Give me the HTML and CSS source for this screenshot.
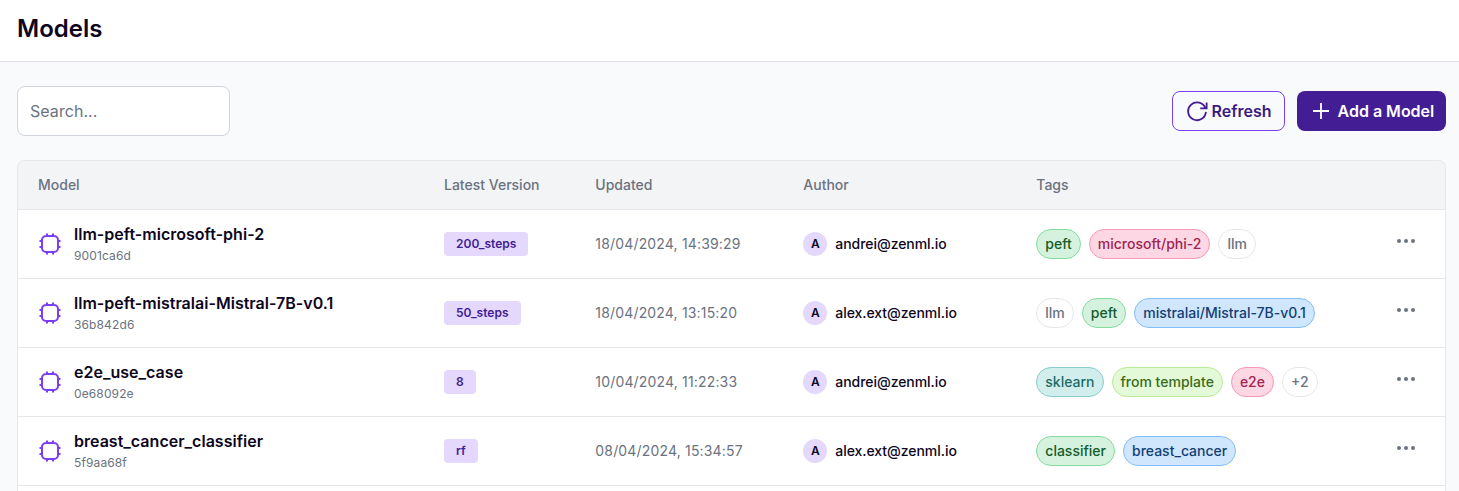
FILE: index.html
```html
<!DOCTYPE html>
<html lang="en">
<head>
<meta charset="utf-8">
<title>Models</title>
<link rel="stylesheet" href="styles.css">
</head>
<body>
<svg class="sprite" aria-hidden="true">
  <symbol id="chip" viewBox="0 0 24 24"><path d="M9 1.500v3M15 1.500v3M9 19.500v3M15 19.500v3M1.500 9h3M1.500 15h3M19.500 9h3M19.500 15h3M8 4h8a4 4 0 0 1 4 4v8a4 4 0 0 1-4 4h-8a4 4 0 0 1-4-4v-8a4 4 0 0 1 4-4z"/></symbol>
  <symbol id="dots" viewBox="0 0 20 6"><circle cx="3" cy="3" r="2"/><circle cx="10" cy="3" r="2"/><circle cx="17" cy="3" r="2"/></symbol>
</svg>
<header class="page-header"><h1 class="title">Models</h1></header>
<main class="content">
  <div class="toolbar">
    <input class="search" type="text" placeholder="Search...">
    <div class="actions">
      <button class="btn btn-outline"><svg class="icon-refresh" viewBox="0 0 24 24"><path d="M21.200 9.200A9.700 9.700 0 1 0 21.700 13M22.500 2.800v6.400h-7"/></svg><span>Refresh</span></button>
      <button class="btn btn-primary"><svg class="icon-plus" viewBox="0 0 16 16"><path d="M8 0v16M0 8h16"/></svg><span>Add a Model</span></button>
    </div>
  </div>
  <section class="table">
    <div class="row head"><span>Model</span><span>Latest Version</span><span>Updated</span><span>Author</span><span>Tags</span><span></span></div>
    <div class="row">
      <div class="model"><svg class="chip"><use href="#chip"/></svg><div><div class="name">llm-peft-microsoft-phi-2</div><div class="id">9001ca6d</div></div></div>
      <div><span class="version">200_steps</span></div>
      <div class="date">18/04/2024, 14:39:29</div>
      <div class="author"><span class="avatar">A</span><span class="email">andrei@zenml.io</span></div>
      <div class="tags"><span class="tag green">peft</span><span class="tag pink">microsoft/phi-2</span><span class="tag">llm</span></div>
      <svg class="dots"><use href="#dots"/></svg>
    </div>
    <div class="row">
      <div class="model"><svg class="chip"><use href="#chip"/></svg><div><div class="name">llm-peft-mistralai-Mistral-7B-v0.1</div><div class="id">36b842d6</div></div></div>
      <div><span class="version">50_steps</span></div>
      <div class="date">18/04/2024, 13:15:20</div>
      <div class="author"><span class="avatar">A</span><span class="email">alex.ext@zenml.io</span></div>
      <div class="tags"><span class="tag">llm</span><span class="tag green">peft</span><span class="tag blue">mistralai/Mistral-7B-v0.1</span></div>
      <svg class="dots"><use href="#dots"/></svg>
    </div>
    <div class="row">
      <div class="model"><svg class="chip"><use href="#chip"/></svg><div><div class="name">e2e_use_case</div><div class="id">0e68092e</div></div></div>
      <div><span class="version">8</span></div>
      <div class="date">10/04/2024, 11:22:33</div>
      <div class="author"><span class="avatar">A</span><span class="email">andrei@zenml.io</span></div>
      <div class="tags"><span class="tag teal">sklearn</span><span class="tag lime">from template</span><span class="tag pink">e2e</span><span class="tag">+2</span></div>
      <svg class="dots"><use href="#dots"/></svg>
    </div>
    <div class="row">
      <div class="model"><svg class="chip"><use href="#chip"/></svg><div><div class="name">breast_cancer_classifier</div><div class="id">5f9aa68f</div></div></div>
      <div><span class="version">rf</span></div>
      <div class="date">08/04/2024, 15:34:57</div>
      <div class="author"><span class="avatar">A</span><span class="email">alex.ext@zenml.io</span></div>
      <div class="tags"><span class="tag green">classifier</span><span class="tag blue">breast_cancer</span></div>
      <svg class="dots"><use href="#dots"/></svg>
    </div>
  </section>
</main>
</body>
</html>
```
FILE: styles.css
```css
* { box-sizing: border-box; }
body {
  display: flex;
  flex-direction: column;
  margin: 0;
  height: 491px;
  overflow: hidden;
  background: #f9fafc;
  color: #0d061d;
  font-family: Inter, sans-serif;
  font-size: 14px;
}
.sprite { display: none; }
.page-header {
  flex: none;
  height: 62px;
  padding: 13px 17px 0;
  background: #fff;
  border-bottom: 1px solid #e2e4ea;
}
.title { margin: 0; font-size: 24px; line-height: 32px; font-weight: 600; }
.content { flex: 1; display: flex; flex-direction: column; min-height: 0; padding: 24px 13px 0 17px; }
.toolbar { display: flex; align-items: center; justify-content: space-between; margin-bottom: 24px; }
.search {
  width: 213px;
  height: 50px;
  padding: 0 12px;
  border: 1px solid #d0d5dd;
  border-radius: 8px;
  background: #fff;
  font: 16px Inter, sans-serif;
  letter-spacing: 0.050px;
}
.search::placeholder { color: #6b7280; }
.actions { display: flex; gap: 12px; }
.btn {
  display: flex;
  align-items: center;
  height: 40px;
  border-radius: 8px;
  font: 600 16px Inter, sans-serif;
  white-space: nowrap;
}
.btn svg { fill: none; stroke: currentColor; flex: none; }
.btn-outline { width: 113px; padding: 0 0 0 13px; gap: 3.500px; border: 1px solid #7a3ef4; background: #f9fafc; color: #431d93; }
.btn-outline span { color: #3b1a80; }
.btn-primary { width: 149px; padding: 0 0 0 16px; gap: 8.500px; border: 0; background: #431d93; color: #fff; }
.icon-refresh { width: 22px; height: 22px; margin-bottom: 1px; stroke-width: 2; }
.icon-plus { width: 16px; height: 16px; stroke-width: 1.800; }
.table {
  flex: 1;
  min-height: 0;
  border: 1px solid #e5e7eb;
  border-bottom: 0;
  border-radius: 8px 8px 0 0;
  background: #fff;
  overflow: hidden;
}
.row {
  display: grid;
  grid-template-columns: 406px 151.300px 208px 233px 359.700px 1fr;
  align-items: center;
  height: 69px;
  padding-left: 20px;
  border-bottom: 1px solid #e5e7eb;
}
.head { height: 49px; padding-bottom: 2px; background: #f3f4f6; color: #6b7280; font-weight: 500; }
.model { display: flex; align-items: center; gap: 12px; }
.chip { width: 24px; height: 24px; fill: none; stroke: #7a3ef4; stroke-width: 2; }
.name { font-size: 16px; line-height: 22px; padding-bottom: 2px; font-weight: 600; letter-spacing: 0.020px; }
.id { font-size: 12px; line-height: 18px; color: #6b7280; letter-spacing: 0.120px; }
.version {
  display: inline-flex;
  align-items: center;
  height: 24px;
  padding: 0 12px 1px;
  border-radius: 4px;
  background: #e4d8fd;
  color: #431d93;
  font-size: 12px;
  font-weight: 600;
  letter-spacing: 0.020px;
}
.date { padding-bottom: 2px; color: #6b7280; letter-spacing: 0.170px; }
.author { display: flex; align-items: center; gap: 8px; font-weight: 500; letter-spacing: -0.050px; }
.email { padding-bottom: 2px; }
.avatar {
  display: flex;
  align-items: center;
  justify-content: center;
  width: 24px;
  height: 24px;
  padding-bottom: 1px;
  border-radius: 50%;
  background: #e4d8fd;
  font-size: 12px;
  font-weight: 600;
}
.tags { display: flex; gap: 8px; }
.tag {
  display: flex;
  align-items: center;
  height: 30px;
  padding: 0 8px 2px;
  border: 1px solid #e5e7eb;
  border-radius: 15px;
  color: #6b7280;
  font-weight: 500;
}
.green { background: #d5f2de; border-color: #83dc9e; color: #145c2a; }
.pink { background: #fdd7e4; border-color: #f997b8; color: #a02450; }
.blue { background: #d0e6fd; border-color: #82bef9; color: #123f75; }
.teal { background: #d2eeec; border-color: #85ceca; color: #1c6c68; }
.lime { background: #e4f9d8; border-color: #b8ec98; color: #3a6c1b; }
.dots { width: 20px; height: 6px; margin-bottom: 6px; fill: #6b7280; }
```
